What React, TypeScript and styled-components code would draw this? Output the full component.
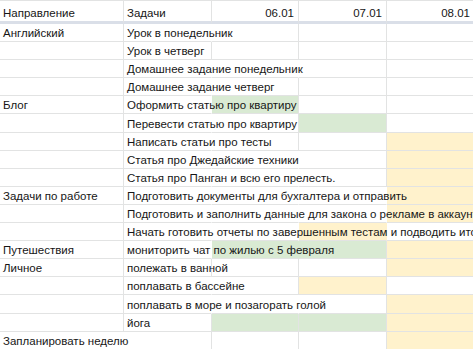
import styled, { createGlobalStyle } from "styled-components"

const GlobalStyle = createGlobalStyle`
  html, body {
    margin: 0;
    padding: 0;
    background: #ffffff;
    overflow: hidden;
  }
  body {
    font-family: "Liberation Sans", Arial, sans-serif;
  }
`

type Fill = "g" | "y" | ""

const fillColors: Record<Fill, string> = {
  g: "#d9ead3",
  y: "#fff2cc",
  "": "#ffffff",
}

const gridLine = "#e2e3e3"

const Sheet = styled.table`
  border-collapse: separate;
  border-spacing: 0;
  table-layout: fixed;
  width: 475px;
  font-size: 11.5px;
  color: #161616;
`

const Col = styled.col<{ $w: number }>`
  width: ${(p) => p.$w}px;
`

const HeadRow = styled.tr`
  height: 24px;
`

const Row = styled.tr`
  height: 18.1px;
`

const HeadCell = styled.th<{ $right?: boolean }>`
  font-weight: normal;
  text-align: ${(p) => (p.$right ? "right" : "left")};
  vertical-align: bottom;
  padding: 0 4px 1px 3px;
  line-height: 14px;
  white-space: nowrap;
  border-top: 1px solid ${gridLine};
  border-right: 1px solid ${gridLine};
  border-bottom: 3px solid #dadfe8;
`

const Cell = styled.td<{ $fill?: Fill; $open?: boolean }>`
  background: ${(p) => fillColors[p.$fill ?? ""]};
  vertical-align: bottom;
  padding: 0 3px 1px 3px;
  line-height: 14px;
  white-space: nowrap;
  overflow: visible;
  border-right: 1px solid ${(p) => (p.$open ? "transparent" : gridLine)};
  border-bottom: 1px solid ${gridLine};
`

type Task = {
  area?: string
  task?: string
  cover?: number
  areaCover?: boolean
  days?: Fill[]
}

const rows: Task[] = [
  { area: "Английский", task: "Урок в понедельник", cover: 1 },
  { task: "Урок в четверг" },
  { task: "Домашнее задание понедельник", cover: 2 },
  { task: "Домашнее задание четверг", cover: 1 },
  { area: "Блог", task: "Оформить статью про квартиру", cover: 1, days: ["g", "", ""] },
  { task: "Перевести статью про квартиру", cover: 1, days: ["", "g", ""] },
  { task: "Написать статьи про тесты", cover: 1, days: ["", "", "y"] },
  { task: "Статья про Джедайские техники", cover: 2, days: ["", "", "y"] },
  { task: "Статья про Панган и всю его прелесть.", cover: 2, days: ["", "", "y"] },
  {
    area: "Задачи по работе",
    task: "Подготовить документы для бухгалтера и отправить",
    cover: 3,
    days: ["", "", "y"],
  },
  {
    task: "Подготовить и заполнить данные для закона о рекламе в аккаунтах",
    cover: 3,
    days: ["", "", "y"],
  },
  {
    task: "Начать готовить отчеты по завершенным тестам и подводить итоги",
    cover: 3,
    days: ["", "y", ""],
  },
  { area: "Путешествия", task: "мониторить чат по жилью с 5 февраля", cover: 2, days: ["g", "g", "y"] },
  { area: "Личное", task: "полежать в ванной", days: ["", "", "y"] },
  { task: "поплавать в бассейне", cover: 1, days: ["", "y", ""] },
  { task: "поплавать в море и позагорать голой", cover: 2, days: ["", "", "y"] },
  { task: "йога", days: ["g", "g", "y"] },
  { area: "Запланировать неделю", areaCover: true, days: ["", "", "y"] },
]

const dates = ["06.01", "07.01", "08.01"]
const colWidths = [124, 88, 87, 88, 88]

export default function App() {
  return (
    <>
      <GlobalStyle />
      <Sheet>
        <colgroup>
          {colWidths.map((w, i) => (
            <Col key={i} $w={w} />
          ))}
        </colgroup>
        <thead>
          <HeadRow>
            <HeadCell>Направление</HeadCell>
            <HeadCell>Задачи</HeadCell>
            {dates.map((d) => (
              <HeadCell key={d} $right>
                {d}
              </HeadCell>
            ))}
          </HeadRow>
        </thead>
        <tbody>
          {rows.map((r, i) => {
            const cover = r.cover ?? 0
            const days = r.days ?? ["", "", ""]
            return (
              <Row key={i}>
                <Cell $open={r.areaCover}>{r.area}</Cell>
                <Cell $open={cover >= 1}>{r.task}</Cell>
                {days.map((f, j) => (
                  <Cell key={j} $fill={f} $open={cover >= j + 2} />
                ))}
              </Row>
            )
          })}
        </tbody>
      </Sheet>
    </>
  )
}
